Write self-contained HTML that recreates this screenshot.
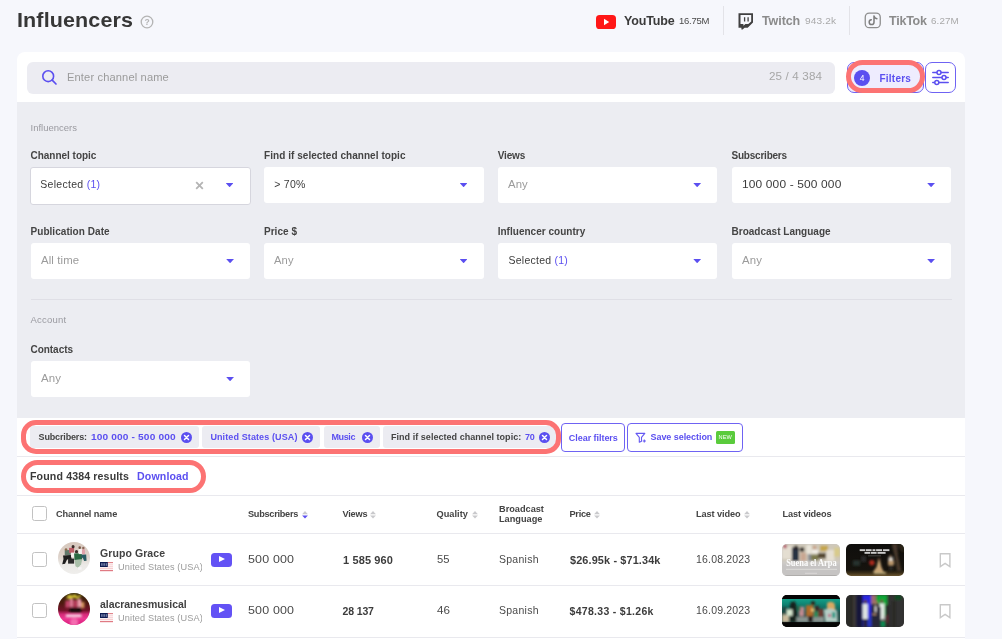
<!DOCTYPE html>
<html lang="en">
<head>
<meta charset="utf-8">
<title>Influencers</title>
<style>
*{box-sizing:border-box;margin:0;padding:0}
html,body{width:1002px;height:639px;overflow:hidden}
html{background:#f6f7fc}
#wrap{position:absolute;left:0;top:0;width:1002px;height:639px;will-change:transform;overflow:hidden}
body{background:transparent;font-family:"Liberation Sans",sans-serif;color:#3a3a3a;position:relative}
.abs{position:absolute}
.t{position:absolute;white-space:nowrap;line-height:1}
h1{position:absolute;left:17.2px;top:6px;font-size:20.5px;font-weight:bold;color:#373737;letter-spacing:0.1px;line-height:28px;white-space:nowrap}
.card{position:absolute;left:16.7px;top:52px;width:948.6px;height:600px;background:#fff;border-radius:8px 8px 0 0}
.search{position:absolute;left:27px;top:62px;width:808px;height:32px;background:#ececf2;border-radius:6px}
.panel{position:absolute;left:16.7px;top:102px;width:948.6px;height:315.5px;background:#ecedf2}
.lbl{position:absolute;font-size:10px;font-weight:bold;color:#444;white-space:nowrap;line-height:12px;letter-spacing:0.15px}
.sec{position:absolute;font-size:9.5px;color:#9a9aa0;white-space:nowrap;line-height:12px}
.sel{position:absolute;width:219.5px;height:36px;background:#fff;border-radius:3px;font-size:10.5px;line-height:35.2px;padding-left:10.3px;color:#3c3c3c;white-space:nowrap;letter-spacing:0.2px}
.sel.ph{color:#9b9b9b}
.sel i{position:absolute;left:195.7px;top:15.9px;width:7.8px;height:4.3px;background:#5b4ff0;clip-path:polygon(0 0,100% 0,50% 100%)}
.sel b{font-weight:normal;color:#5b4ff0}
.hr{position:absolute;height:1px;background:#e4e4ea}
.chip{position:absolute;top:426px;height:22px;background:#ececf2;border-radius:3px;font-size:9px;font-weight:bold;line-height:22px;color:#444;white-space:nowrap;padding-left:8px;letter-spacing:0.1px}
.chip span{color:#5b4ff0}
.btn{position:absolute;top:423.1px;height:28.6px;border:1px solid #6f63f3;border-radius:4px;color:#5b4ff0;font-size:9px;font-weight:bold;line-height:27.2px;white-space:nowrap;background:#fff}
.ring{position:absolute;border:5px solid #fc7373;border-radius:18px}
.th{position:absolute;font-size:9.2px;font-weight:bold;color:#444;white-space:nowrap;line-height:10.5px;letter-spacing:0.1px}
.sort{position:absolute;width:5.2px;height:7px;margin-left:0.6px;margin-top:1px}
.sort:before,.sort:after{content:"";position:absolute;left:0;width:0;height:0;border-left:2.6px solid transparent;border-right:2.6px solid transparent}
.sort:before{top:0;border-bottom:3px solid #c6c6ca}
.sort:after{top:4px;border-top:3px solid #c6c6ca}
.sort.on:after{border-top-color:#5b4ff0}
.cb{position:absolute;width:14.3px;height:14.3px;margin:-0.15px;border:1.6px solid #c2c2c2;border-radius:2.5px;background:#fff}
.td{position:absolute;font-size:10.5px;color:#4a4a4a;white-space:nowrap;line-height:14px;letter-spacing:0.2px}
.td.b{font-weight:bold;color:#3c3c3c;font-size:10.5px;letter-spacing:0.1px}
.nm{position:absolute;font-size:10.5px;font-weight:bold;color:#424242;white-space:nowrap;line-height:14px;letter-spacing:0.1px}
.ct{position:absolute;font-size:8.7px;color:#9b9b9b;white-space:nowrap;line-height:12px}
.yt{position:absolute;width:21px;height:14.5px;border-radius:3.5px;background:#6352f5}
.yt:after{content:"";position:absolute;left:8px;top:3.7px;border-left:6px solid #fff;border-top:3.5px solid transparent;border-bottom:3.5px solid transparent}
.av{position:absolute;width:32px;height:32px;border-radius:50%;overflow:hidden}
.tn{position:absolute;width:58px;height:32px;border-radius:5px;overflow:hidden}
.rowline{position:absolute;left:16.7px;width:948.6px;height:1px;background:#e9e9ee}
/*FIT*/
#title{letter-spacing:0.12px;display:inline-block;transform-origin:0 50%;transform:scaleX(1.0491)}
#yt1{letter-spacing:-0.17px}
#yt2{letter-spacing:-0.24px}
#tw1{letter-spacing:-0.09px}
#tw2{letter-spacing:0.12px;display:inline-block;transform-origin:0 50%;transform:scaleX(1.0641)}
#tk1{letter-spacing:-0.23px}
#tk2{letter-spacing:0.12px;display:inline-block;transform-origin:0 50%;transform:scaleX(1.0303)}
#ph{letter-spacing:0.12px;display:inline-block;transform-origin:0 50%;transform:scaleX(1.1119)}
#cnt{letter-spacing:0.12px;display:inline-block;transform-origin:0 50%;transform:scaleX(1.1302)}
#flt{letter-spacing:0.23px}
#sec1{letter-spacing:0.00px}
#l1{letter-spacing:-0.02px}
#s1{letter-spacing:0.29px}
#l2{letter-spacing:0.05px}
#s2{letter-spacing:0.23px}
#l3{letter-spacing:-0.14px}
#s3{letter-spacing:0.12px;display:inline-block;transform-origin:0 50%;transform:scaleX(1.0794)}
#l4{letter-spacing:-0.22px}
#s4{letter-spacing:0.12px;display:inline-block;transform-origin:0 50%;transform:scaleX(1.1391)}
#l5{letter-spacing:0.05px}
#s5{letter-spacing:0.12px;display:inline-block;transform-origin:0 50%;transform:scaleX(1.0830)}
#l6{letter-spacing:0.03px}
#s6{letter-spacing:0.12px;display:inline-block;transform-origin:0 50%;transform:scaleX(1.0631)}
#l7{letter-spacing:0.02px}
#s7{letter-spacing:0.25px}
#l8{letter-spacing:0.01px}
#s8{letter-spacing:0.12px;display:inline-block;transform-origin:0 50%;transform:scaleX(1.0849)}
#sec2{letter-spacing:0.20px}
#l9{letter-spacing:-0.04px}
#s9{letter-spacing:0.12px;display:inline-block;transform-origin:0 50%;transform:scaleX(1.0903)}
#c1a{letter-spacing:-0.16px}
#c1b{letter-spacing:0.12px;display:inline-block;transform-origin:0 50%;transform:scaleX(1.1282)}
#c2{letter-spacing:0.11px}
#c3{letter-spacing:-0.38px}
#c4a{letter-spacing:0.04px}
#c4b{letter-spacing:-0.02px}
#b1{letter-spacing:-0.04px}
#b2{letter-spacing:-0.05px}
#found{letter-spacing:0.12px;display:inline-block;transform-origin:0 50%;transform:scaleX(1.0614)}
#dl{letter-spacing:0.12px;display:inline-block;transform-origin:0 50%;transform:scaleX(1.0613)}
#h1{letter-spacing:-0.14px}
#h2{letter-spacing:-0.28px}
#h3{letter-spacing:-0.20px}
#h4{letter-spacing:0.04px}
#h6{letter-spacing:-0.27px}
#h7{letter-spacing:-0.09px}
#h8{letter-spacing:-0.15px}
#h5{letter-spacing:0.00px}
#r1n{letter-spacing:0.08px}
#r1c{letter-spacing:0.12px;display:inline-block;transform-origin:0 50%;transform:scaleX(1.0550)}
#r1s{letter-spacing:0.12px;display:inline-block;transform-origin:0 50%;transform:scaleX(1.1893)}
#r1v{letter-spacing:0.12px;display:inline-block;transform-origin:0 50%;transform:scaleX(1.0485)}
#r1q{letter-spacing:0.12px;display:inline-block;transform-origin:0 50%;transform:scaleX(1.0666)}
#r1l{letter-spacing:0.26px}
#r1p{letter-spacing:0.12px;display:inline-block;transform-origin:0 50%;transform:scaleX(1.0370)}
#r1d{letter-spacing:0.18px}
#r2n{letter-spacing:-0.06px}
#r2c{letter-spacing:0.12px;display:inline-block;transform-origin:0 50%;transform:scaleX(1.0550)}
#r2s{letter-spacing:0.12px;display:inline-block;transform-origin:0 50%;transform:scaleX(1.1893)}
#r2v{letter-spacing:-0.14px}
#r2q{letter-spacing:0.12px;display:inline-block;transform-origin:0 50%;transform:scaleX(1.1089)}
#r2l{letter-spacing:0.26px}
#r2p{letter-spacing:0.30px}
#r2d{letter-spacing:0.18px}
/*ENDFIT*/
</style>
</head>
<body>
<div id="wrap">
<h1 id="title">Influencers</h1>
<svg class="abs" style="left:140px;top:15px" width="14" height="14" viewBox="0 0 14 14"><circle cx="7" cy="7" r="5.8" fill="none" stroke="#b4b4b4" stroke-width="1.3"/><text x="7" y="10" font-size="8.5" font-family="Liberation Sans, sans-serif" font-weight="bold" text-anchor="middle" fill="#b4b4b4">?</text></svg>


<!-- top platform tabs -->
<svg class="abs" style="left:596px;top:14.5px" width="20" height="14" viewBox="0 0 20 14"><rect width="20" height="14" rx="3.6" fill="#ff1717"/><path d="M8 3.8 L13.2 7 L8 10.2Z" fill="#fff"/></svg>
<div class="t" id="yt1" style="left:624px;top:13.8px;font-size:12.5px;font-weight:bold;color:#3a3a3a;line-height:15px">YouTube</div>
<div class="t" id="yt2" style="left:679px;top:15.4px;font-size:9.5px;color:#4a4a4a;line-height:11px">16.75M</div>
<div class="abs" style="left:723px;top:6px;width:1px;height:29px;background:#e3e3e8"></div>
<svg class="abs" style="left:738px;top:12px" width="16" height="18" viewBox="738 12 16 18"><path fill-rule="evenodd" fill="#404040" d="M738.5 13.2 H753 V22.6 L747.7 27.7 H744.6 L742.6 29.5 H741.4 V27.7 H738.5 Z M740.5 15.1 V24 H743.4 V25.8 L745.4 24 H748.3 L751.2 21.4 V15.1 Z"/><path d="M744.6 17.2 V21.4 M748.1 17.2 V21.4" stroke="#404040" stroke-width="1.3" fill="none"/></svg>
<div class="t" id="tw1" style="left:762px;top:13.8px;font-size:12.5px;font-weight:bold;color:#8b8b8b;line-height:15px">Twitch</div>
<div class="t" id="tw2" style="left:805px;top:15.4px;font-size:9.5px;color:#a9a9a9;line-height:11px">943.2k</div>
<div class="abs" style="left:849px;top:6px;width:1px;height:29px;background:#e3e3e8"></div>
<svg class="abs" style="left:864px;top:12px" width="18" height="17" viewBox="864 12 18 17"><rect x="865.25" y="13.15" width="15" height="14.5" rx="4" fill="none" stroke="#8e8e8e" stroke-width="1.3"/><path d="M874 15.9 V22.2 A2.4 2.4 0 1 1 871.3 19.8 M874 15.9 C874.3 17.5 875.3 18.5 876.9 18.7" fill="none" stroke="#7c7c7c" stroke-width="1.5" stroke-linecap="round"/></svg>
<div class="t" id="tk1" style="left:889px;top:13.8px;font-size:12.5px;font-weight:bold;color:#8b8b8b;line-height:15px">TikTok</div>
<div class="t" id="tk2" style="left:931px;top:15.4px;font-size:9.5px;color:#a9a9a9;line-height:11px">6.27M</div>

<div class="card"></div>
<div class="search"></div>

<!-- search -->
<svg class="abs" style="left:41px;top:69px" width="17" height="17" viewBox="0 0 17 17"><circle cx="7.2" cy="7.2" r="5.4" fill="none" stroke="#5b4ff0" stroke-width="1.6"/><path d="M11.2 11.2 L15 15" stroke="#5b4ff0" stroke-width="1.7" stroke-linecap="round"/></svg>
<div class="t" id="ph" style="left:67px;top:70.8px;font-size:10px;color:#9b9b9b;line-height:13px">Enter channel name</div>
<div class="t" id="cnt" style="left:768.5px;top:69.9px;font-size:10.3px;color:#a6a6a6;line-height:13px">25 / 4 384</div>
<div class="abs" style="left:847px;top:62px;width:77px;height:31px;border:1px solid #6f63f3;border-radius:7px;background:#eeecfe"></div>
<div class="abs" style="left:854px;top:70px;width:16px;height:16px;border-radius:50%;background:#5b4ff0;color:#fff;font-size:8.5px;line-height:16px;text-align:center">4</div>
<div class="t" id="flt" style="left:879.5px;top:71.5px;font-size:10px;font-weight:bold;color:#5b4ff0;line-height:13px">Filters</div>
<div class="ring" style="left:845.5px;top:60px;width:79px;height:33px;border-width:5px;border-radius:17px"></div>
<div class="abs" style="left:925px;top:62px;width:31px;height:31px;border:1px solid #6f63f3;border-radius:7px;background:#fff"></div>
<svg class="abs" style="left:931px;top:68px" width="19" height="19" viewBox="0 0 19 19"><g stroke="#5b4ff0" stroke-width="1.5" fill="#fff" stroke-linecap="round"><path d="M1.8 4.4 H17.2 M1.8 9.6 H17.2 M1.8 14.6 H17.2"/><circle cx="8" cy="4.4" r="2"/><circle cx="13" cy="9.6" r="2"/><circle cx="5.8" cy="14.6" r="2"/></g></svg>

<div class="panel"></div>
<!-- filter panel -->
<div class="sec" id="sec1" style="left:30.5px;top:122px">Influencers</div>
<div class="lbl" id="l1" style="left:30.5px;top:150.1px">Channel topic</div>
<div class="sel " style="left:30.0px;top:166.5px;width:220.5px;height:38px;border:1px solid #d6d6de;line-height:33.4px;padding-left:9.3px"><span id="s1">Selected <b>(1)</b></span><i style="top:15.4px;left:194.7px"></i><svg style="position:absolute;left:164px;top:13.5px" width="9" height="9" viewBox="0 0 9 9"><path d="M1.2 1.2 L7.8 7.8 M7.8 1.2 L1.2 7.8" stroke="#b4b4b4" stroke-width="1.8"/></svg></div>
<div class="lbl" id="l2" style="left:264px;top:150.1px">Find if selected channel topic</div>
<div class="sel " style="left:264px;top:167px;width:220px"><span id="s2">&gt; 70%</span><i></i></div>
<div class="lbl" id="l3" style="left:497.7px;top:150.1px">Views</div>
<div class="sel ph" style="left:497.6px;top:167px;padding-left:10.9px"><span id="s3">Any</span><i></i></div>
<div class="lbl" id="l4" style="left:731.5px;top:150.1px">Subscribers</div>
<div class="sel " style="left:731.5px;top:167px"><span id="s4">100 000 - 500 000</span><i></i></div>
<div class="lbl" id="l5" style="left:30.5px;top:226.1px">Publication Date</div>
<div class="sel ph" style="left:30.5px;top:243px"><span id="s5">All time</span><i></i></div>
<div class="lbl" id="l6" style="left:264px;top:226.1px">Price $</div>
<div class="sel ph" style="left:264px;top:243px;width:220px"><span id="s6">Any</span><i></i></div>
<div class="lbl" id="l7" style="left:497.7px;top:226.1px">Influencer country</div>
<div class="sel " style="left:497.6px;top:243px;padding-left:10.9px"><span id="s7">Selected <b>(1)</b></span><i></i></div>
<div class="lbl" id="l8" style="left:731.5px;top:226.1px">Broadcast Language</div>
<div class="sel ph" style="left:731.5px;top:243px"><span id="s8">Any</span><i></i></div>
<div class="hr" style="left:30.5px;top:299px;width:921px;background:#dfdfe6"></div>
<div class="sec" id="sec2" style="left:30.5px;top:314px">Account</div>
<div class="lbl" id="l9" style="left:30.5px;top:343.6px">Contacts</div>
<div class="sel ph" style="left:30.5px;top:361px"><span id="s9">Any</span><i></i></div>
<!-- active filter chips -->
<div class="chip" style="left:30px;width:169px;padding-left:8.6px"><span id="c1a" style="color:inherit">Subcribers:</span> <span id="c1b" style="margin-left:1.6px">100 000 - 500 000</span><svg style="position:absolute;right:6.8px;top:5.7px" width="11" height="11" viewBox="0 0 11 11"><circle cx="5.5" cy="5.5" r="5.5" fill="#5b4ff0"/><path d="M3.5 3.5 L7.5 7.5 M7.5 3.5 L3.5 7.5" stroke="#fff" stroke-width="1.5" stroke-linecap="round"/></svg></div>
<div class="chip" style="left:201.5px;width:118.5px;padding-left:8.9px"><span id="c2" style="color:inherit"><span>United States (USA)</span></span><svg style="position:absolute;right:6.8px;top:5.7px" width="11" height="11" viewBox="0 0 11 11"><circle cx="5.5" cy="5.5" r="5.5" fill="#5b4ff0"/><path d="M3.5 3.5 L7.5 7.5 M7.5 3.5 L3.5 7.5" stroke="#fff" stroke-width="1.5" stroke-linecap="round"/></svg></div>
<div class="chip" style="left:323.5px;width:56px"><span id="c3" style="color:inherit"><span>Music</span></span><svg style="position:absolute;right:6.8px;top:5.7px" width="11" height="11" viewBox="0 0 11 11"><circle cx="5.5" cy="5.5" r="5.5" fill="#5b4ff0"/><path d="M3.5 3.5 L7.5 7.5 M7.5 3.5 L3.5 7.5" stroke="#fff" stroke-width="1.5" stroke-linecap="round"/></svg></div>
<div class="chip" style="left:383px;width:173.7px"><span id="c4a" style="color:inherit">Find if selected channel topic:</span> <span id="c4b" style="margin-left:1px">70</span><svg style="position:absolute;right:6.8px;top:5.7px" width="11" height="11" viewBox="0 0 11 11"><circle cx="5.5" cy="5.5" r="5.5" fill="#5b4ff0"/><path d="M3.5 3.5 L7.5 7.5 M7.5 3.5 L3.5 7.5" stroke="#fff" stroke-width="1.5" stroke-linecap="round"/></svg></div>
<div class="ring" style="left:21.4px;top:420.3px;width:539.4px;height:33.3px;border-radius:15px"></div>
<div class="btn" style="left:561.1px;width:64.2px;padding-left:6.7px"><span id="b1" style="position:relative;top:0.6px">Clear filters</span></div>
<div class="btn" style="left:627.3px;width:115.3px;padding-left:22.2px"><span id="b2">Save selection</span><svg style="position:absolute;left:6.5px;top:7.5px" width="12" height="12" viewBox="0 0 12 12"><path d="M1 1.4 H9.8 L6.5 5.4 V9.2 L4.3 10.2 V5.4 Z" fill="none" stroke="#6559f2" stroke-width="1.1" stroke-linejoin="round"/><path d="M9.3 7.4 V10.6 M7.7 9 H10.9" stroke="#6559f2" stroke-width="1.1"/></svg><span style="position:absolute;left:87.5px;top:6.9px;width:19px;height:12.7px;border-radius:1.5px;background:#5acb3c;color:#fff;font-size:5.6px;line-height:13px;text-align:center;letter-spacing:0.1px;font-weight:normal">NEW</span></div>
<div class="rowline" style="top:456px"></div>
<div class="t" id="found" style="left:30px;top:470px;font-size:10px;font-weight:bold;color:#3a3a3a;line-height:13px">Found 4384 results</div>
<div class="t" id="dl" style="left:136.5px;top:470px;font-size:10px;font-weight:bold;color:#5b4ff0;line-height:13px">Download</div>
<div class="ring" style="left:21.4px;top:459.6px;width:184.2px;height:33.2px;border-radius:16.6px"></div>
<div class="rowline" style="top:495px"></div>
<!-- table header -->
<div class="cb" style="left:32.5px;top:506.5px"></div>
<div class="th" id="h1" style="left:56px;top:508.5px">Channel name</div>
<div class="th" id="h2" style="left:248px;top:508.5px">Subscribers</div>
<svg class="abs" style="left:301.7px;top:510.7px" width="6" height="8" viewBox="0 0 6 8"><path d="M0.1 3.2 L3 0.1 L5.9 3.2Z" fill="#c9c9cc"/><path d="M0.1 4.4 L5.9 4.4 L3 7.5Z" fill="#5b4ff0"/></svg>
<div class="th" id="h3" style="left:342.5px;top:508.5px">Views</div>
<svg class="abs" style="left:370.2px;top:510.7px" width="6" height="8" viewBox="0 0 6 8"><path d="M0.1 3.2 L3 0.1 L5.9 3.2Z" fill="#c9c9cc"/><path d="M0.1 4.4 L5.9 4.4 L3 7.5Z" fill="#c9c9cc"/></svg>
<div class="th" id="h4" style="left:436.5px;top:508.5px">Quality</div>
<svg class="abs" style="left:471.7px;top:510.7px" width="6" height="8" viewBox="0 0 6 8"><path d="M0.1 3.2 L3 0.1 L5.9 3.2Z" fill="#c9c9cc"/><path d="M0.1 4.4 L5.9 4.4 L3 7.5Z" fill="#c9c9cc"/></svg>
<div class="th" id="h6" style="left:569.5px;top:508.5px">Price</div>
<svg class="abs" style="left:594.2px;top:510.7px" width="6" height="8" viewBox="0 0 6 8"><path d="M0.1 3.2 L3 0.1 L5.9 3.2Z" fill="#c9c9cc"/><path d="M0.1 4.4 L5.9 4.4 L3 7.5Z" fill="#c9c9cc"/></svg>
<div class="th" id="h7" style="left:696px;top:508.5px">Last video</div>
<svg class="abs" style="left:744.2px;top:510.7px" width="6" height="8" viewBox="0 0 6 8"><path d="M0.1 3.2 L3 0.1 L5.9 3.2Z" fill="#c9c9cc"/><path d="M0.1 4.4 L5.9 4.4 L3 7.5Z" fill="#c9c9cc"/></svg>
<div class="th" id="h8" style="left:782.5px;top:508.5px">Last videos</div>
<div class="th" id="h5" style="left:499px;top:503.5px">Broadcast<br>Language</div>
<div class="rowline" style="top:533px"></div>
<!-- rows -->
<div class="cb" style="left:32.5px;top:552.5px"></div>
<div class="nm" id="r1n" style="left:100px;top:545.5px">Grupo Grace</div>
<svg class="abs" style="left:99.9px;top:562.4px" width="13.2" height="9.2" viewBox="0 0 13.2 9.2"><rect width="13.2" height="9.2" fill="#fdf3f3"/><rect y="0" width="13.2" height="1.1" fill="#e0858d"/><rect y="2.3" width="13.2" height="0.9" fill="#f6d2d5"/><rect y="4.1" width="13.2" height="0.9" fill="#f6d2d5"/><rect y="5.9" width="13.2" height="0.9" fill="#f3c4c8"/><rect y="8" width="13.2" height="1.2" fill="#e07a83"/><rect width="7.8" height="5" fill="#0e1c52"/><g fill="#aeb8d8"><rect x="1.4" y="1.2" width="1" height="2.6"/><rect x="3.6" y="1.2" width="1" height="2.6"/><rect x="5.8" y="1.2" width="0.8" height="2.6"/></g></svg>
<div class="abs" style="left:117.8px;top:561.0px;width:84.3px;height:12px;overflow:hidden"><div class="ct" id="r1c" style="left:0;top:0">United States (USA)</div></div>
<div class="yt" style="left:211px;top:552.5px"></div>
<div class="td" id="r1s" style="left:248px;top:552.0px">500 000</div>
<div class="td b" id="r1v" style="left:342.5px;top:553.3px">1 585 960</div>
<div class="td" id="r1q" style="left:436.5px;top:552.0px">55</div>
<div class="td" id="r1l" style="left:499px;top:552.0px">Spanish</div>
<div class="td b" id="r1p" style="left:569.5px;top:553.3px">$26.95k - $71.34k</div>
<div class="td" id="r1d" style="left:696px;top:552.0px">16.08.2023</div>
<svg class="abs" style="left:938.5px;top:552.5px" width="12" height="15" viewBox="0 0 12 15"><path d="M1.3 0.8 H10.9 V13.6 L6.1 10.3 L1.3 13.6 Z" fill="none" stroke="#c9c9c9" stroke-width="1.4" stroke-linejoin="miter"/></svg>
<div class="cb" style="left:32.5px;top:603.5px"></div>
<div class="nm" id="r2n" style="left:100px;top:596.5px">alacranesmusical</div>
<svg class="abs" style="left:99.9px;top:613.4px" width="13.2" height="9.2" viewBox="0 0 13.2 9.2"><rect width="13.2" height="9.2" fill="#fdf3f3"/><rect y="0" width="13.2" height="1.1" fill="#e0858d"/><rect y="2.3" width="13.2" height="0.9" fill="#f6d2d5"/><rect y="4.1" width="13.2" height="0.9" fill="#f6d2d5"/><rect y="5.9" width="13.2" height="0.9" fill="#f3c4c8"/><rect y="8" width="13.2" height="1.2" fill="#e07a83"/><rect width="7.8" height="5" fill="#0e1c52"/><g fill="#aeb8d8"><rect x="1.4" y="1.2" width="1" height="2.6"/><rect x="3.6" y="1.2" width="1" height="2.6"/><rect x="5.8" y="1.2" width="0.8" height="2.6"/></g></svg>
<div class="abs" style="left:117.8px;top:612.0px;width:84.3px;height:12px;overflow:hidden"><div class="ct" id="r2c" style="left:0;top:0">United States (USA)</div></div>
<div class="yt" style="left:211px;top:603.5px"></div>
<div class="td" id="r2s" style="left:248px;top:603.0px">500 000</div>
<div class="td b" id="r2v" style="left:342.5px;top:604.3px">28 137</div>
<div class="td" id="r2q" style="left:436.5px;top:603.0px">46</div>
<div class="td" id="r2l" style="left:499px;top:603.0px">Spanish</div>
<div class="td b" id="r2p" style="left:569.5px;top:604.3px">$478.33 - $1.26k</div>
<div class="td" id="r2d" style="left:696px;top:603.0px">16.09.2023</div>
<svg class="abs" style="left:938.5px;top:603.5px" width="12" height="15" viewBox="0 0 12 15"><path d="M1.3 0.8 H10.9 V13.6 L6.1 10.3 L1.3 13.6 Z" fill="none" stroke="#c9c9c9" stroke-width="1.4" stroke-linejoin="miter"/></svg>
<div class="av" style="left:58px;top:541.9px;width:32.2px;height:32.2px"><svg width="32.2" height="32.2" viewBox="0 0 32 32"><defs><filter id="bl1" x="-20%" y="-20%" width="140%" height="140%"><feGaussianBlur stdDeviation="0.75"/></filter><linearGradient id="ag1" x1="0" y1="0" x2="0" y2="1"><stop offset="0" stop-color="#d6c7bc"/><stop offset="0.45" stop-color="#ddd2ca"/><stop offset="0.7" stop-color="#ebe9e6"/><stop offset="1" stop-color="#efeeec"/></linearGradient></defs><rect width="32" height="32" fill="url(#ag1)"/><g filter="url(#bl1)">
<rect x="6.7" y="8" width="6" height="5" fill="#62786a"/><path d="M5 13.5 L13 13 L13.5 17 L9 17.5 L7 21.5 L4.2 22 L5.5 17Z" fill="#1b1b1b"/>
<rect x="11" y="5.8" width="5" height="5" fill="#bf5f68"/><circle cx="15" cy="4.6" r="1.5" fill="#3a2a26"/>
<rect x="13" y="10.6" width="3.4" height="4.6" fill="#f5f1ee"/>
<rect x="10" y="16.5" width="6" height="5" fill="#2b2b2b"/>
<circle cx="18.4" cy="9.6" r="1.6" fill="#3b2f2a"/><path d="M16 11.4 L23.6 11 L24 17.5 L16.4 17.8Z" fill="#2a6b43"/>
<path d="M16.5 18 L24 17.5 L23 22 L20 25.5 L17.4 24Z" fill="#a9bfa9"/><rect x="20" y="25" width="3.4" height="2.6" fill="#f5f5f5"/>
<rect x="20.5" y="7" width="3.6" height="5" fill="#f6f2f0"/><circle cx="21.6" cy="5.6" r="1.3" fill="#7a5a4a"/>
<rect x="23.8" y="7.2" width="3" height="5" fill="#e0a2aa"/><circle cx="25.2" cy="6" r="1.2" fill="#8a6656"/>
<path d="M23 12.6 L28 12.4 L28.4 18.6 L26 18.8 L24.6 15.6 L23.2 16Z" fill="#2b5b62"/>
<circle cx="8" cy="7.4" r="1.3" fill="#8c6e50"/>
</g></svg></div>
<div class="av" style="left:58px;top:593.1px;width:32.2px;height:32.2px"><svg width="32.2" height="32.2" viewBox="0 0 32 32"><defs><filter id="bl2" x="-20%" y="-20%" width="140%" height="140%"><feGaussianBlur stdDeviation="0.8"/></filter><linearGradient id="ag2" x1="0" y1="0" x2="0" y2="1"><stop offset="0" stop-color="#33280a"/><stop offset="0.3" stop-color="#4c1a0e"/><stop offset="0.54" stop-color="#74122a"/><stop offset="0.66" stop-color="#d42a78"/><stop offset="0.8" stop-color="#ec3892"/><stop offset="1" stop-color="#d8187a"/></linearGradient></defs><rect width="32" height="32" fill="url(#ag2)"/><g filter="url(#bl2)">
<path d="M8.5 5.5 C8.5 1.5 13 0.8 14 3.2 C14.5 0.8 19 0.6 19 4 L22 1.5 L23 3 L19.5 6 L16 4.5 L13 6Z" fill="#d6c636"/>
<rect x="7.4" y="7.5" width="4" height="7" fill="#c8446e"/><rect x="11.6" y="6" width="3.4" height="8" fill="#e07a98"/><rect x="15.4" y="7" width="4" height="7.5" fill="#b83a5c"/><rect x="19.6" y="6" width="3.4" height="8" fill="#f0a2b4"/><rect x="23" y="9" width="3.2" height="6" fill="#d89a60"/>
<rect x="11.4" y="14.6" width="11.6" height="4.6" fill="#180a08"/>
<rect x="7.8" y="21.5" width="15.6" height="2.4" fill="#fae8f1"/>
<circle cx="16" cy="29" r="4" fill="#f46cb0"/>
</g></svg></div>
<div class="tn" style="left:782.1px;top:543.9px;height:31.9px"><svg width="58" height="32" viewBox="0 0 58 32"><defs><filter id="b3" x="-20%" y="-20%" width="140%" height="140%"><feGaussianBlur stdDeviation="0.8"/></filter><filter id="b3t" x="-20%" y="-20%" width="140%" height="140%"><feGaussianBlur stdDeviation="0.25"/></filter></defs><rect width="58" height="32" fill="#c9c6c4"/><g filter="url(#b3)">
<rect x="0" y="0" width="58" height="18" fill="#cfc8b8"/>
<rect x="0" y="2" width="10" height="13" fill="#e4ded1"/><circle cx="3" cy="2.4" r="2" fill="#b2566a"/>
<rect x="9.9" y="3.5" width="7" height="14" fill="#283042"/><circle cx="14" cy="3.6" r="2.2" fill="#2a2422"/>
<circle cx="20" cy="5.6" r="2.4" fill="#2c2624"/><rect x="18.4" y="8.6" width="5.8" height="9" fill="#c9a792"/>
<rect x="24.5" y="1" width="5" height="9" fill="#e9e5da"/>
<rect x="29" y="10.6" width="7.4" height="6" fill="#7b7a4e"/>
<circle cx="32.6" cy="3.6" r="2" fill="#c9a288"/><rect x="30" y="5.8" width="6" height="3.6" fill="#f3efe9"/>
<rect x="36" y="9" width="8" height="5.4" fill="#574830"/><rect x="38" y="1.6" width="8" height="5.6" fill="#c5a64c"/>
<rect x="44.4" y="6" width="8" height="11" fill="#e6e0d4"/><rect x="52" y="3.6" width="6" height="9" fill="#d8ca8c"/>
<rect x="26" y="10" width="3" height="8" fill="#8b8f95"/>
<rect x="0" y="19" width="58" height="13" fill="#c6c4c3"/><rect x="0" y="17" width="58" height="3" fill="#cfccc8"/>
</g><text x="4.2" y="22.4" textLength="50.4" lengthAdjust="spacingAndGlyphs" font-family="Liberation Serif, serif" font-weight="bold" font-size="9.6" fill="#fdfdfd" filter="url(#b3t)">Suena el Arpa</text><rect x="4" y="24.8" width="51" height="1" fill="#dddbd9"/><rect x="23" y="28.8" width="12" height="0.9" fill="#dddbd9"/><rect x="0" y="31.2" width="58" height="0.8" fill="#a9a7a5"/></svg></div>
<div class="tn" style="left:846.1px;top:543.9px;height:31.9px"><svg width="58" height="32" viewBox="0 0 58 32"><defs><filter id="b4" x="-20%" y="-20%" width="140%" height="140%"><feGaussianBlur stdDeviation="0.8"/></filter><filter id="b4t" x="-20%" y="-20%" width="140%" height="140%"><feGaussianBlur stdDeviation="0.3"/></filter><linearGradient id="g4" x1="0" y1="0" x2="0" y2="1"><stop offset="0" stop-color="#0f0e0c"/><stop offset="0.8" stop-color="#16130e"/><stop offset="0.9" stop-color="#3a2e18"/><stop offset="1" stop-color="#6a5530"/></linearGradient></defs><rect width="58" height="32" fill="url(#g4)"/><g filter="url(#b4)">
<path d="M45.7 0 L51 0 L52 12 L55.4 27 L51 27 L48.6 12Z" fill="#47382a"/><path d="M51 0 L58 0 L58 9 L54 6Z" fill="#2a2418"/>
<circle cx="25.9" cy="18.8" r="2.7" fill="#a9291e"/>
<path d="M32.2 16.6 L34 17 L35.4 23 L38 28.4 L26.6 28.6 L30.6 23Z" fill="#c9a574"/><circle cx="33" cy="15.6" r="1.5" fill="#6a4a36"/>
<rect x="42.4" y="13.4" width="4.6" height="4" fill="#e2ded6"/><rect x="42" y="16.6" width="6" height="4.6" fill="#b8946a"/><circle cx="44.6" cy="12.2" r="1.3" fill="#8a6a50"/><rect x="43" y="21" width="4" height="5.6" fill="#2a2622"/>
<rect x="7" y="16.4" width="7" height="5.4" fill="#26332e"/><rect x="15" y="12" width="5" height="6" fill="#2c2c2a"/>
<rect x="28" y="28" width="12" height="2" fill="#b8a878"/>
</g><g filter="url(#b4t)" opacity="0.85"><rect x="13.7" y="5.2" width="29.7" height="1.9" fill="#ededed"/><rect x="18.5" y="7.9" width="21.1" height="1.9" fill="#ededed"/><g fill="#14110e"><rect x="19" y="5" width="0.7" height="2.4"/><rect x="25.6" y="5" width="0.9" height="2.4"/><rect x="29.4" y="5" width="0.7" height="2.4"/><rect x="36" y="5" width="0.9" height="2.4"/><rect x="24" y="7.7" width="0.7" height="2.4"/><rect x="30.6" y="7.7" width="0.9" height="2.4"/></g><rect x="22" y="11.6" width="13" height="0.6" fill="#7a7a7a"/></g></svg></div>
<div class="tn" style="left:782.1px;top:594.9px;height:31.9px"><svg width="58" height="32" viewBox="0 0 58 32"><defs><filter id="b5" x="-20%" y="-20%" width="140%" height="140%"><feGaussianBlur stdDeviation="0.85"/></filter><linearGradient id="g5" x1="0" y1="0" x2="0" y2="1"><stop offset="0" stop-color="#12a088"/><stop offset="0.3" stop-color="#0f7a6c"/><stop offset="0.6" stop-color="#23514c"/><stop offset="1" stop-color="#2c4a46"/></linearGradient></defs><rect width="58" height="32" fill="#040404"/><rect x="0" y="4" width="58" height="23.2" fill="url(#g5)"/><g filter="url(#b5)">
<rect x="0" y="19.6" width="7" height="7.6" fill="#c9b99b"/><rect x="0" y="12" width="5" height="7" fill="#1f4a44"/>
<path d="M9 7 L13 6.6 L14.6 12 L14.6 27 L8 27 L7.4 13Z" fill="#18201c"/><rect x="4.8" y="14.4" width="5.8" height="6.4" fill="#d7e7cf"/>
<rect x="17" y="11.8" width="5.2" height="9.6" fill="#c08a90"/><rect x="15.4" y="11" width="3" height="5" fill="#2a6a4a"/>
<rect x="14.4" y="22" width="27.6" height="5.2" fill="#88938f"/>
<circle cx="31" cy="8.2" r="2" fill="#2a1c14"/><rect x="24" y="10.2" width="7.4" height="11.4" fill="#ae6a2c"/><circle cx="30.6" cy="15" r="1.8" fill="#f3c473"/><rect x="26" y="21" width="5" height="6" fill="#2a2420"/>
<rect x="32" y="16.6" width="4" height="5.6" fill="#2a8a5a"/><rect x="36" y="14" width="5.6" height="8" fill="#693a30"/><rect x="33" y="11" width="4" height="5" fill="#3a2c28"/>
<path d="M45 9 C45 6 52.6 6 52.8 9.6 L53.4 15.6 L45 15.6Z" fill="#d8a862"/>
<path d="M42 14.6 L49 13.6 L55 15.6 L55.6 27 L43.4 27Z" fill="#b6cec6"/><rect x="46" y="19" width="3" height="3" fill="#c06a8a"/><rect x="50" y="17" width="3.4" height="6" fill="#2a9a86"/>
</g><rect x="0" y="0" width="58" height="4" fill="#040404"/><rect x="0" y="27.2" width="58" height="4.8" fill="#060605"/></svg></div>
<div class="tn" style="left:846.1px;top:594.9px;height:31.9px"><svg width="58" height="32" viewBox="0 0 58 32"><defs><filter id="b6" x="-20%" y="-20%" width="140%" height="140%"><feGaussianBlur stdDeviation="0.85"/></filter></defs><rect width="58" height="32" fill="#333230"/><g filter="url(#b6)">
<rect x="0" y="0" width="7" height="32" fill="#2b2a27"/><rect x="7" y="0" width="3" height="32" fill="#3a3936"/>
<rect x="10" y="0" width="7" height="32" fill="#17163a"/>
<rect x="16.6" y="0" width="9" height="32" fill="#2a28e4"/><rect x="17" y="22" width="11" height="10" fill="#2636c4"/>
<rect x="25.2" y="0" width="4.6" height="9" fill="#a06a72"/>
<path d="M30.3 0 L41.2 0 L41.2 10 L40.6 21 L38 21 L36 10 L30.3 8Z" fill="#10a838"/><rect x="32" y="26" width="7" height="6" fill="#0b8a52"/>
<rect x="42" y="0" width="16" height="32" fill="#333330"/><rect x="48.9" y="0" width="6.4" height="5" fill="#0b4a22"/><rect x="46" y="6" width="4" height="26" fill="#2a2a28"/>
<circle cx="19.4" cy="6.6" r="1.9" fill="#5a4038"/><rect x="16.6" y="8.8" width="5.2" height="15.2" fill="#dfe4e1"/><rect x="17.4" y="24" width="4" height="8" fill="#25243a"/>
<rect x="33.2" y="8.4" width="5.4" height="16.2" fill="#e1e9e1"/><circle cx="35.6" cy="6.4" r="1.7" fill="#6a5040"/>
<path d="M25.2 12 L29.6 10.4 L34.6 12 L34.8 32 L25.6 32Z" fill="#262637"/><circle cx="29.6" cy="7.6" r="2.1" fill="#9e765e"/><rect x="28.6" y="10.6" width="2" height="6.4" fill="#d9d5d1"/><rect x="26.4" y="18.4" width="4" height="1.8" fill="#b08a70"/>
<rect x="39.4" y="10" width="4.4" height="22" fill="#292929"/><rect x="40.6" y="20" width="1.2" height="8" fill="#7a3038"/>
</g></svg></div>
<div class="rowline" style="top:585px"></div>
<div class="rowline" style="top:636.5px"></div>
</div>
</body>
</html>
